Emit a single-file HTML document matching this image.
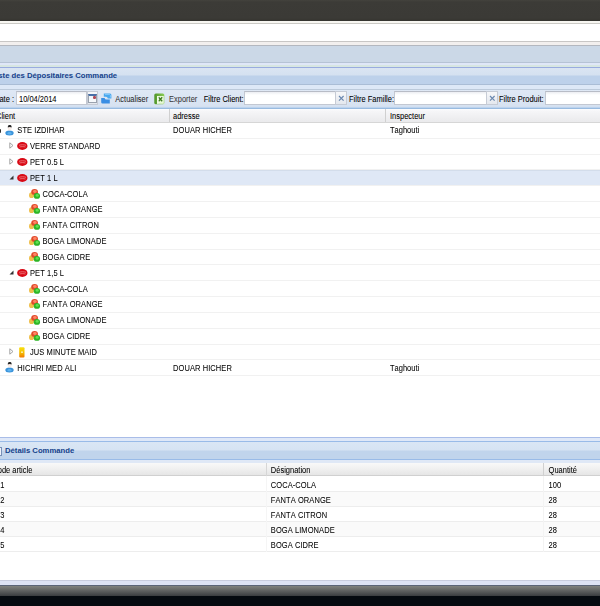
<!DOCTYPE html>
<html><head><meta charset="utf-8">
<style>
*{margin:0;padding:0;box-sizing:border-box}
html,body{width:600px;height:606px;overflow:hidden;background:#fff;position:relative;font-family:"Liberation Sans",sans-serif;font-size:7.5px;color:#000}
.t{transform:scaleY(1.1);transform-origin:0 50%;-webkit-text-stroke:0.05px currentColor}
.b{transform:none;-webkit-text-stroke:0}
.a{position:absolute}
.t{position:absolute;white-space:nowrap;line-height:10px;font-kerning:none}
.hl{position:absolute;left:-10px;width:620px}
svg{position:absolute;overflow:visible}
</style></head><body><div id="w" style="position:absolute;left:-10px;top:-10px;width:620px;height:626px;overflow:hidden;filter:blur(0.35px)"><div id="c" style="position:absolute;left:10px;top:10px;width:600px;height:606px">
<div class="hl" style="top:-10px;height:31px;background:linear-gradient(#43423d 10px,#3c3b37 12px,#3b3a36 28px,#35342f 31px);"></div>
<div class="hl" style="top:21px;height:2px;background:#f7f6f1;"></div>
<div class="hl" style="top:23px;height:1px;background:#cbcac5;"></div>
<div class="hl" style="top:41px;height:1px;background:#c8c6c5;"></div>
<div class="hl" style="top:42px;height:3px;background:#f2efee;"></div>
<div class="hl" style="top:45px;height:1px;background:#b3b7bf;"></div>
<div class="hl" style="top:46px;height:16px;background:#cbd8e7;"></div>
<div class="hl" style="top:62px;height:1px;background:#b6c3d5;"></div>
<div class="hl" style="top:63px;height:2px;background:#dfe7f8;"></div>
<div class="hl" style="top:65px;height:2px;background:#d7e6e2;"></div>
<div class="hl" style="top:67px;height:1px;background:#99acdf;"></div>
<div class="hl" style="top:68px;height:16px;background:linear-gradient(#dae5f3 0,#d5e1f0 7px,#bdd1ea 8px,#bdd1eb 16px);"></div>
<div class="hl" style="top:84px;height:1px;background:#aabdd6;"></div>
<div class="t" style="left:-8.5px;top:70.5px;font-weight:bold;color:#15428b;font-size:7.7px;transform:none;-webkit-text-stroke:0">Liste des Dépositaires Commande</div>
<div class="hl" style="top:85px;height:4px;background:#dde8f7;"></div>
<div class="hl" style="top:89px;height:1px;background:#bccadb;"></div>
<div class="hl" style="top:90px;height:16px;background:linear-gradient(#dfe8f5,#d7e2f1);"></div>
<div class="hl" style="top:106px;height:1px;background:#d4e0f0;"></div>
<div class="hl" style="top:107px;height:1px;background:#bcd3ee;"></div>
<div class="hl" style="top:108px;height:1px;background:#99bbe0;"></div>
<div class="t" style="left:-6px;top:95.0px;">Date :</div>
<div class="a" style="left:16px;top:91px;width:71px;height:14px;border:1px solid #c3c8d2;border-top-color:#b8bcc6;background:linear-gradient(#eceef2 0,#fff 3px)"></div>
<div class="t" style="left:19px;top:95.0px;">10/04/2014</div>
<div class="a" style="left:87px;top:91px;width:11px;height:14px;background:linear-gradient(#f6f7f9,#e4e8ee);border:1px solid #c6cbd5"></div>
<div class="a" style="left:88px;top:94.2px;width:8.6px;height:8.5px;background:linear-gradient(#eef4f8,#f8fafc);border:1px solid #9aa2ae;border-top:2px solid #4a70a8"></div>
<div class="a" style="left:93px;top:96.3px;width:2.8px;height:3px;background:#b04a58;border-radius:40%"></div>
<svg style="left:100px;top:92px" width="13" height="13" viewBox="0 0 13 13"><path d="M3.8 1.5 H10 Q11.4 1.5 11.4 3 V6.4 H7.8 Q7.6 4.8 6 4.8 H3.8 Z" fill="#4aa8ee"/><path d="M1.2 6 H4.6 Q4.8 7.6 6.5 7.6 H9.8 V11.6 H2.6 Q1.2 11.6 1.2 10.2 Z" fill="#3a8ee4"/><path d="M5 2.4 L9.5 2.4 L10.4 3.5 L10.4 5.5" stroke="#8fd0ff" stroke-width="0.8" fill="none"/></svg>
<div class="t" style="left:115.3px;top:95.0px;color:#2a2a2a">Actualiser</div>
<svg style="left:154px;top:92.5px" width="11" height="12" viewBox="0 0 11 12"><defs><linearGradient id="eg" x1="0" y1="0" x2="1" y2="0"><stop offset="0" stop-color="#4f9428"/><stop offset="1" stop-color="#8ccf58"/></linearGradient></defs><rect x="0.3" y="0.5" width="10" height="10.8" rx="1.5" fill="url(#eg)"/><rect x="3.2" y="3" width="6.6" height="7.8" fill="#e8f8d8"/><path d="M4.6 4.2 L8.2 8.2 M8.2 4.2 L4.6 8.2" stroke="#3c7a20" stroke-width="1.3"/><rect x="3.2" y="3" width="1.2" height="7.8" fill="#f8fff0"/></svg>
<div class="t" style="left:169px;top:95.0px;color:#3a3a3a">Exporter</div>
<div class="t" style="left:203.7px;top:95.0px;">Filtre Client:</div>
<div class="a" style="left:244px;top:91px;width:92px;height:14px;border:1px solid #c3c8d2;border-top-color:#b8bcc6;background:linear-gradient(#eceef2 0,#fff 3px)"></div>
<div class="a" style="left:335px;top:91px;width:12px;height:14px;background:linear-gradient(#f6f7f9,#e4e8ee);border:1px solid #c6cbd5"></div>
<svg style="left:338px;top:95px" width="7" height="7" viewBox="0 0 7 7"><path d="M1 1 L5.6 5.6 M5.6 1 L1 5.6" stroke="#6a88b0" stroke-width="1.2"/></svg>
<div class="t" style="left:349px;top:95.0px;">Filtre Famille:</div>
<div class="a" style="left:394px;top:91px;width:93px;height:14px;border:1px solid #c3c8d2;border-top-color:#b8bcc6;background:linear-gradient(#eceef2 0,#fff 3px)"></div>
<div class="a" style="left:486px;top:91px;width:12px;height:14px;background:linear-gradient(#f6f7f9,#e4e8ee);border:1px solid #c6cbd5"></div>
<svg style="left:489px;top:95px" width="7" height="7" viewBox="0 0 7 7"><path d="M1 1 L5.6 5.6 M5.6 1 L1 5.6" stroke="#6a88b0" stroke-width="1.2"/></svg>
<div class="t" style="left:499px;top:95.0px;">Filtre Produit:</div>
<div class="a" style="left:545px;top:91px;width:80px;height:14px;border:1px solid #c3c8d2;border-top-color:#b8bcc6;background:linear-gradient(#eceef2 0,#fff 3px)"></div>
<div class="hl" style="top:109px;height:14px;background:linear-gradient(#fdfdfe 0,#f6f6f8 2px,#ebebed 12px);border-bottom:1px solid #d6d6d6"></div>
<div class="a" style="left:168.5px;top:109px;width:1px;height:13px;background:#d0d0d0"></div>
<div class="a" style="left:385px;top:109px;width:1px;height:13px;background:#d0d0d0"></div>
<div class="t" style="left:-4px;top:111.8px;">Client</div>
<div class="t" style="left:173px;top:111.8px;">adresse</div>
<div class="t" style="left:390px;top:111.8px;">Inspecteur</div>
<div class="a" style="left:0px;top:137.83px;width:600px;height:1px;background:#f1f1f1"></div>
<svg style="left:5px;top:124.00px" width="10" height="11" viewBox="0 0 10 11"><ellipse cx="4.5" cy="9.1" rx="4.2" ry="2.5" fill="#3b93da"/><ellipse cx="4.5" cy="9.3" rx="2" ry="1.2" fill="#5cb2f0"/><ellipse cx="4.7" cy="4.3" rx="1.9" ry="2.3" fill="#f6ece8"/><path d="M2.8 3.6 C2.7 1.4 3.6 1 4.7 1 C5.9 1 6.8 1.4 6.6 3.6 C6 2.9 3.4 2.9 2.8 3.6Z" fill="#262626"/></svg>
<div class="a" style="left:-2px;top:128.5px;width:3px;height:4px;background:#333;border-radius:1px"></div>
<div class="t" style="left:17.3px;top:126.2px;letter-spacing:0.08px">STE IZDIHAR</div>
<div class="t" style="left:173px;top:126.2px;letter-spacing:0.08px">DOUAR HICHER</div>
<div class="t" style="left:390px;top:126.2px;">Taghouti</div>
<div class="a" style="left:0px;top:153.66px;width:600px;height:1px;background:#f1f1f1"></div>
<svg style="left:16.5px;top:142.23px" width="11" height="8" viewBox="0 0 11 8"><ellipse cx="5.3" cy="4" rx="5.2" ry="3.9" fill="#d80814"/><path d="M2 3.3 C4 2.6 7 2.6 9 3.3 M2.5 5 C4.5 4.5 6.5 4.5 8.5 5" stroke="#f6b0b0" stroke-width="0.6" fill="none"/></svg>
<svg style="left:9px;top:142.43px" width="5" height="7" viewBox="0 0 5 7"><path d="M0.8 0.8 L4 3.5 L0.8 6.2 Z" fill="none" stroke="#9a9a9a" stroke-width="0.9"/></svg>
<div class="t" style="left:30px;top:142.03px;letter-spacing:0.08px">VERRE STANDARD</div>
<div class="a" style="left:0px;top:169.49px;width:600px;height:1px;background:#f1f1f1"></div>
<svg style="left:16.5px;top:158.06px" width="11" height="8" viewBox="0 0 11 8"><ellipse cx="5.3" cy="4" rx="5.2" ry="3.9" fill="#d80814"/><path d="M2 3.3 C4 2.6 7 2.6 9 3.3 M2.5 5 C4.5 4.5 6.5 4.5 8.5 5" stroke="#f6b0b0" stroke-width="0.6" fill="none"/></svg>
<svg style="left:9px;top:158.26px" width="5" height="7" viewBox="0 0 5 7"><path d="M0.8 0.8 L4 3.5 L0.8 6.2 Z" fill="none" stroke="#9a9a9a" stroke-width="0.9"/></svg>
<div class="t" style="left:30px;top:157.86px;letter-spacing:0.08px">PET 0.5 L</div>
<div class="a" style="left:-10px;top:169.69px;width:620px;height:16.13px;background:#dfe8f6;border-top:1px solid #d3ddeb;border-bottom:1px solid #cbd6e6"></div>
<div class="a" style="left:0px;top:185.32px;width:600px;height:1px;background:#f1f1f1"></div>
<svg style="left:16.5px;top:173.89px" width="11" height="8" viewBox="0 0 11 8"><ellipse cx="5.3" cy="4" rx="5.2" ry="3.9" fill="#d80814"/><path d="M2 3.3 C4 2.6 7 2.6 9 3.3 M2.5 5 C4.5 4.5 6.5 4.5 8.5 5" stroke="#f6b0b0" stroke-width="0.6" fill="none"/></svg>
<svg style="left:9px;top:174.79px" width="5" height="5" viewBox="0 0 5 5"><path d="M4.5 0.5 L4.5 4.5 L0.5 4.5 Z" fill="#333"/></svg>
<div class="t" style="left:30px;top:173.69px;letter-spacing:0.08px">PET 1 L</div>
<div class="a" style="left:0px;top:201.15px;width:600px;height:1px;background:#f1f1f1"></div>
<svg style="left:29px;top:188.52px" width="11" height="10" viewBox="0 0 11 10"><ellipse cx="2.5" cy="6.2" rx="2.5" ry="2.9" fill="#efc04c"/><ellipse cx="5.6" cy="3.1" rx="3.4" ry="3" fill="#e04a2c"/><ellipse cx="5.9" cy="2.5" rx="1.8" ry="1.4" fill="#ff8664"/><ellipse cx="7.9" cy="6.9" rx="3.2" ry="2.9" fill="#2cb526"/><ellipse cx="8.2" cy="6.4" rx="1.6" ry="1.3" fill="#60e052"/></svg>
<div class="t" style="left:42.5px;top:189.52px;letter-spacing:0.08px">COCA-COLA</div>
<div class="a" style="left:0px;top:216.98px;width:600px;height:1px;background:#f1f1f1"></div>
<svg style="left:29px;top:204.35px" width="11" height="10" viewBox="0 0 11 10"><ellipse cx="2.5" cy="6.2" rx="2.5" ry="2.9" fill="#efc04c"/><ellipse cx="5.6" cy="3.1" rx="3.4" ry="3" fill="#e04a2c"/><ellipse cx="5.9" cy="2.5" rx="1.8" ry="1.4" fill="#ff8664"/><ellipse cx="7.9" cy="6.9" rx="3.2" ry="2.9" fill="#2cb526"/><ellipse cx="8.2" cy="6.4" rx="1.6" ry="1.3" fill="#60e052"/></svg>
<div class="t" style="left:42.5px;top:205.35px;letter-spacing:0.08px">FANTA ORANGE</div>
<div class="a" style="left:0px;top:232.81px;width:600px;height:1px;background:#f1f1f1"></div>
<svg style="left:29px;top:220.18px" width="11" height="10" viewBox="0 0 11 10"><ellipse cx="2.5" cy="6.2" rx="2.5" ry="2.9" fill="#efc04c"/><ellipse cx="5.6" cy="3.1" rx="3.4" ry="3" fill="#e04a2c"/><ellipse cx="5.9" cy="2.5" rx="1.8" ry="1.4" fill="#ff8664"/><ellipse cx="7.9" cy="6.9" rx="3.2" ry="2.9" fill="#2cb526"/><ellipse cx="8.2" cy="6.4" rx="1.6" ry="1.3" fill="#60e052"/></svg>
<div class="t" style="left:42.5px;top:221.18px;letter-spacing:0.08px">FANTA CITRON</div>
<div class="a" style="left:0px;top:248.64px;width:600px;height:1px;background:#f1f1f1"></div>
<svg style="left:29px;top:236.01px" width="11" height="10" viewBox="0 0 11 10"><ellipse cx="2.5" cy="6.2" rx="2.5" ry="2.9" fill="#efc04c"/><ellipse cx="5.6" cy="3.1" rx="3.4" ry="3" fill="#e04a2c"/><ellipse cx="5.9" cy="2.5" rx="1.8" ry="1.4" fill="#ff8664"/><ellipse cx="7.9" cy="6.9" rx="3.2" ry="2.9" fill="#2cb526"/><ellipse cx="8.2" cy="6.4" rx="1.6" ry="1.3" fill="#60e052"/></svg>
<div class="t" style="left:42.5px;top:237.01px;letter-spacing:0.08px">BOGA LIMONADE</div>
<div class="a" style="left:0px;top:264.47px;width:600px;height:1px;background:#f1f1f1"></div>
<svg style="left:29px;top:251.84px" width="11" height="10" viewBox="0 0 11 10"><ellipse cx="2.5" cy="6.2" rx="2.5" ry="2.9" fill="#efc04c"/><ellipse cx="5.6" cy="3.1" rx="3.4" ry="3" fill="#e04a2c"/><ellipse cx="5.9" cy="2.5" rx="1.8" ry="1.4" fill="#ff8664"/><ellipse cx="7.9" cy="6.9" rx="3.2" ry="2.9" fill="#2cb526"/><ellipse cx="8.2" cy="6.4" rx="1.6" ry="1.3" fill="#60e052"/></svg>
<div class="t" style="left:42.5px;top:252.84px;letter-spacing:0.08px">BOGA CIDRE</div>
<div class="a" style="left:0px;top:280.3px;width:600px;height:1px;background:#f1f1f1"></div>
<svg style="left:16.5px;top:268.87px" width="11" height="8" viewBox="0 0 11 8"><ellipse cx="5.3" cy="4" rx="5.2" ry="3.9" fill="#d80814"/><path d="M2 3.3 C4 2.6 7 2.6 9 3.3 M2.5 5 C4.5 4.5 6.5 4.5 8.5 5" stroke="#f6b0b0" stroke-width="0.6" fill="none"/></svg>
<svg style="left:9px;top:269.77px" width="5" height="5" viewBox="0 0 5 5"><path d="M4.5 0.5 L4.5 4.5 L0.5 4.5 Z" fill="#333"/></svg>
<div class="t" style="left:30px;top:268.67px;letter-spacing:0.08px">PET 1,5 L</div>
<div class="a" style="left:0px;top:296.13px;width:600px;height:1px;background:#f1f1f1"></div>
<svg style="left:29px;top:283.50px" width="11" height="10" viewBox="0 0 11 10"><ellipse cx="2.5" cy="6.2" rx="2.5" ry="2.9" fill="#efc04c"/><ellipse cx="5.6" cy="3.1" rx="3.4" ry="3" fill="#e04a2c"/><ellipse cx="5.9" cy="2.5" rx="1.8" ry="1.4" fill="#ff8664"/><ellipse cx="7.9" cy="6.9" rx="3.2" ry="2.9" fill="#2cb526"/><ellipse cx="8.2" cy="6.4" rx="1.6" ry="1.3" fill="#60e052"/></svg>
<div class="t" style="left:42.5px;top:284.5px;letter-spacing:0.08px">COCA-COLA</div>
<div class="a" style="left:0px;top:311.96px;width:600px;height:1px;background:#f1f1f1"></div>
<svg style="left:29px;top:299.33px" width="11" height="10" viewBox="0 0 11 10"><ellipse cx="2.5" cy="6.2" rx="2.5" ry="2.9" fill="#efc04c"/><ellipse cx="5.6" cy="3.1" rx="3.4" ry="3" fill="#e04a2c"/><ellipse cx="5.9" cy="2.5" rx="1.8" ry="1.4" fill="#ff8664"/><ellipse cx="7.9" cy="6.9" rx="3.2" ry="2.9" fill="#2cb526"/><ellipse cx="8.2" cy="6.4" rx="1.6" ry="1.3" fill="#60e052"/></svg>
<div class="t" style="left:42.5px;top:300.33px;letter-spacing:0.08px">FANTA ORANGE</div>
<div class="a" style="left:0px;top:327.79px;width:600px;height:1px;background:#f1f1f1"></div>
<svg style="left:29px;top:315.16px" width="11" height="10" viewBox="0 0 11 10"><ellipse cx="2.5" cy="6.2" rx="2.5" ry="2.9" fill="#efc04c"/><ellipse cx="5.6" cy="3.1" rx="3.4" ry="3" fill="#e04a2c"/><ellipse cx="5.9" cy="2.5" rx="1.8" ry="1.4" fill="#ff8664"/><ellipse cx="7.9" cy="6.9" rx="3.2" ry="2.9" fill="#2cb526"/><ellipse cx="8.2" cy="6.4" rx="1.6" ry="1.3" fill="#60e052"/></svg>
<div class="t" style="left:42.5px;top:316.16px;letter-spacing:0.08px">BOGA LIMONADE</div>
<div class="a" style="left:0px;top:343.62px;width:600px;height:1px;background:#f1f1f1"></div>
<svg style="left:29px;top:330.99px" width="11" height="10" viewBox="0 0 11 10"><ellipse cx="2.5" cy="6.2" rx="2.5" ry="2.9" fill="#efc04c"/><ellipse cx="5.6" cy="3.1" rx="3.4" ry="3" fill="#e04a2c"/><ellipse cx="5.9" cy="2.5" rx="1.8" ry="1.4" fill="#ff8664"/><ellipse cx="7.9" cy="6.9" rx="3.2" ry="2.9" fill="#2cb526"/><ellipse cx="8.2" cy="6.4" rx="1.6" ry="1.3" fill="#60e052"/></svg>
<div class="t" style="left:42.5px;top:331.99px;letter-spacing:0.08px">BOGA CIDRE</div>
<div class="a" style="left:0px;top:359.45px;width:600px;height:1px;background:#f1f1f1"></div>
<svg style="left:19px;top:346.92px" width="6" height="11" viewBox="0 0 6 11"><defs><linearGradient id="jg" x1="0" y1="0" x2="0" y2="1"><stop offset="0" stop-color="#f8e010"/><stop offset="0.5" stop-color="#f5c000"/><stop offset="1" stop-color="#f07800"/></linearGradient></defs><rect x="0.2" y="0.3" width="5.3" height="10.3" rx="1" fill="url(#jg)"/><circle cx="3" cy="5.2" r="0.9" fill="#fff" opacity="0.8"/></svg>
<svg style="left:9px;top:348.22px" width="5" height="7" viewBox="0 0 5 7"><path d="M0.8 0.8 L4 3.5 L0.8 6.2 Z" fill="none" stroke="#9a9a9a" stroke-width="0.9"/></svg>
<div class="t" style="left:30px;top:347.82px;letter-spacing:0.08px">JUS MINUTE MAID</div>
<div class="a" style="left:0px;top:375.28px;width:600px;height:1px;background:#f1f1f1"></div>
<svg style="left:5px;top:361.45px" width="10" height="11" viewBox="0 0 10 11"><ellipse cx="4.5" cy="9.1" rx="4.2" ry="2.5" fill="#3b93da"/><ellipse cx="4.5" cy="9.3" rx="2" ry="1.2" fill="#5cb2f0"/><ellipse cx="4.7" cy="4.3" rx="1.9" ry="2.3" fill="#f6ece8"/><path d="M2.8 3.6 C2.7 1.4 3.6 1 4.7 1 C5.9 1 6.8 1.4 6.6 3.6 C6 2.9 3.4 2.9 2.8 3.6Z" fill="#262626"/></svg>
<div class="t" style="left:17.3px;top:363.65px;letter-spacing:0.08px">HICHRI MED ALI</div>
<div class="t" style="left:173px;top:363.65px;letter-spacing:0.08px">DOUAR HICHER</div>
<div class="t" style="left:390px;top:363.65px;">Taghouti</div>
<div class="hl" style="top:437px;height:1px;background:#a9bde8;"></div>
<div class="hl" style="top:438px;height:3px;background:#dfe8f8;"></div>
<div class="hl" style="top:441px;height:1px;background:#99bbe8;"></div>
<div class="hl" style="top:442px;height:17px;background:linear-gradient(#dae6f5 0,#d6e3f3 8px,#c0d4ec 9px,#c0d4ec 17px);"></div>
<div class="hl" style="top:459px;height:1px;background:#99bbe8;"></div>
<div class="hl" style="top:460px;height:3px;background:#dfe8f6;"></div>
<div class="hl" style="top:462.5px;height:1px;background:#c5d0e0;"></div>
<div class="a" style="left:-4.5px;top:446.8px;width:6px;height:8.8px;border:1px solid #7890b8;background:#eef2fa"></div>
<div class="t" style="left:5px;top:446.1px;font-weight:bold;color:#15428b;font-size:7.7px;transform:none;-webkit-text-stroke:0">Détails Commande</div>
<div class="hl" style="top:463px;height:13px;background:linear-gradient(#f9f9f9,#e6e6e6);border-bottom:1px solid #d0d0d0"></div>
<div class="a" style="left:265.5px;top:463px;width:1px;height:13px;background:#d6d6d6"></div>
<div class="a" style="left:543px;top:463px;width:1px;height:13px;background:#d0d0d0"></div>
<div class="t" style="left:-7.7px;top:466px;">Code article</div>
<div class="t" style="left:270.8px;top:466px;">Désignation</div>
<div class="t" style="left:548.6px;top:466px;">Quantité</div>
<div class="a" style="left:0px;top:490.55px;width:600px;height:1px;background:#ededed"></div>
<div class="a" style="left:265.5px;top:476.4px;width:1px;height:15.15px;background:#f5f5f5"></div>
<div class="a" style="left:543px;top:476.4px;width:1px;height:15.15px;background:#f3f3f3"></div>
<div class="t" style="left:0.3px;top:480.7px;">1</div>
<div class="t" style="left:270.8px;top:480.7px;letter-spacing:0.08px">COCA-COLA</div>
<div class="t" style="left:548.6px;top:480.7px;">100</div>
<div class="a" style="left:0px;top:491.55px;width:600px;height:15.15px;background:#fafafa"></div>
<div class="a" style="left:0px;top:505.7px;width:600px;height:1px;background:#ededed"></div>
<div class="a" style="left:265.5px;top:491.55px;width:1px;height:15.15px;background:#f5f5f5"></div>
<div class="a" style="left:543px;top:491.55px;width:1px;height:15.15px;background:#f3f3f3"></div>
<div class="t" style="left:0.3px;top:495.85px;">2</div>
<div class="t" style="left:270.8px;top:495.85px;letter-spacing:0.08px">FANTA ORANGE</div>
<div class="t" style="left:548.6px;top:495.85px;">28</div>
<div class="a" style="left:0px;top:520.85px;width:600px;height:1px;background:#ededed"></div>
<div class="a" style="left:265.5px;top:506.7px;width:1px;height:15.15px;background:#f5f5f5"></div>
<div class="a" style="left:543px;top:506.7px;width:1px;height:15.15px;background:#f3f3f3"></div>
<div class="t" style="left:0.3px;top:511.0px;">3</div>
<div class="t" style="left:270.8px;top:511.0px;letter-spacing:0.08px">FANTA CITRON</div>
<div class="t" style="left:548.6px;top:511.0px;">28</div>
<div class="a" style="left:0px;top:521.85px;width:600px;height:15.15px;background:#fafafa"></div>
<div class="a" style="left:0px;top:536.0px;width:600px;height:1px;background:#ededed"></div>
<div class="a" style="left:265.5px;top:521.85px;width:1px;height:15.15px;background:#f5f5f5"></div>
<div class="a" style="left:543px;top:521.85px;width:1px;height:15.15px;background:#f3f3f3"></div>
<div class="t" style="left:0.3px;top:526.15px;">4</div>
<div class="t" style="left:270.8px;top:526.15px;letter-spacing:0.08px">BOGA LIMONADE</div>
<div class="t" style="left:548.6px;top:526.15px;">28</div>
<div class="a" style="left:0px;top:551.15px;width:600px;height:1px;background:#ededed"></div>
<div class="a" style="left:265.5px;top:537.0px;width:1px;height:15.15px;background:#f5f5f5"></div>
<div class="a" style="left:543px;top:537.0px;width:1px;height:15.15px;background:#f3f3f3"></div>
<div class="t" style="left:0.3px;top:541.3px;">5</div>
<div class="t" style="left:270.8px;top:541.3px;letter-spacing:0.08px">BOGA CIDRE</div>
<div class="t" style="left:548.6px;top:541.3px;">28</div>
<div class="hl" style="top:580px;height:1px;background:#c8cde0;"></div>
<div class="hl" style="top:581px;height:3.5px;background:#dde3f5;"></div>
<div class="hl" style="top:584.5px;height:1px;background:#5a6478;"></div>
<div class="hl" style="top:585.5px;height:10.5px;background:linear-gradient(#80827f,#3a3d40);"></div>
<div class="hl" style="top:596px;height:20px;background:#050a10;"></div>
</div></div></body></html>
